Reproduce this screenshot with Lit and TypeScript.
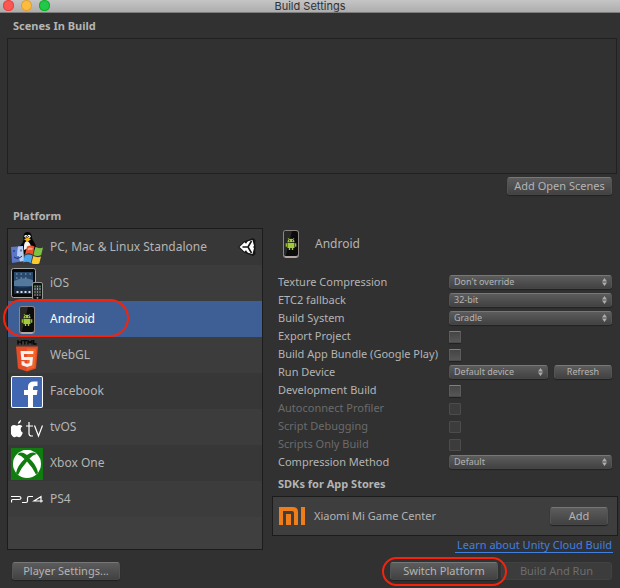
import { LitElement, html, svg, css, nothing, TemplateResult } from "lit";
import { customElement, property, state } from "lit/decorators.js";
import { classMap } from "lit/directives/class-map.js";

const phone = svg`
  <rect x="8" y="2" width="16" height="28" rx="3" fill="#8d8583"/>
  <rect x="9" y="3" width="14" height="25" rx="2" fill="#0b0b0b"/>
  <path d="M9 5q0-2 2-2h6l-6 24h-2z" fill="#292929"/>
  <path d="M10 28h12v1q-1 1-2 1h-8q-2 0-2-1z" fill="#b3a8a4"/>
  <path d="M13 10l1 1.500M19 10l-1 1.500" stroke="#9fc63b" stroke-width=".8"/>
  <path d="M12.500 14.300a3.500 3.500 0 0 1 7 0z" fill="#a4c93c"/>
  <path d="M12.500 15h7v5h-1.300v2h-1.400v-2h-1.600v2h-1.400v-2h-1.300z" fill="#a4c93c"/>
  <path d="M11.300 15.200v3.600M20.700 15.200v3.600" stroke="#a4c93c" stroke-width="1.200"/>
  <path d="M14 12.800h1M17 12.800h1" stroke="#0b0b0b" stroke-width="1"/>`;

const icons: Record<string, TemplateResult> = {
  android: phone,
  desktop: svg`
    <path d="M9 14q3-3 3.500-6C12 3 13 0 16.500 0S21 3 21 6c1 4 4 5 4 10l-6 6h-7z" fill="#050505"/>
    <path d="M13 14q0-4 3-5 3 1 4 6l-7 3z" fill="#f4f4f4"/>
    <circle cx="14.800" cy="4.300" r="1.400" fill="#fff"/><circle cx="18" cy="4.300" r="1.600" fill="#fff"/>
    <circle cx="15.200" cy="4.500" r=".6" fill="#000"/><circle cx="17.700" cy="4.500" r=".6" fill="#000"/>
    <path d="M13 7.200l3.500-1.700 3.500 1.700-3.500 2.500z" fill="#f5b50c"/>
    <path d="M0 15l12-1 1 15-12 2z" fill="#5b78c8"/>
    <path d="M7 14.500l5-.5 1 15-4 .6q-1-3-1-5.600H6q0-5 1-9.500z" fill="#b7cdf2"/>
    <path d="M3 18v2M10 17.500v2M3 25q4 3 8-1" stroke="#1d2c5c" stroke-width="1" fill="none"/>
    <path d="M16 14.500q3.500-2 7.500 0L21.800 22.500q-4-2-7.800 0z" fill="#e8502a"/>
    <path d="M24.300 15q4 2 7.700.5l-1.800 7.500q-4 2-7.700 0z" fill="#7cc142"/>
    <path d="M13.800 23.500q4-2 7.700 0L19.800 31q-4-2-7.800-.5z" fill="#49a6ee"/>
    <path d="M22.300 24q4 2 7.700.5L28.300 31.500q-4 1.500-7.800-.3z" fill="#fbca2f"/>
    <path d="M17 16q2-1 4.800 0l-.6 2q-2-.8-4.700.2z" fill="#f69c7c"/>`,
  ios: svg`
    <rect x=".5" y=".5" width="24" height="29" rx="2" fill="#0a0a0a" stroke="#a6a6a6"/>
    <rect x="3" y="4" width="19" height="22" fill="#28486c"/>
    <path d="M3 13q9-5 19-1v6H3z" fill="#55799c"/><path d="M3 18q8 3 19 0v8H3z" fill="#182b43"/>
    <path d="M5 6h1.500M9.500 6h1.500M14 6h1.500M18.500 6h1.500M5 10h1.500M9.500 10h1.500M14 10h1.500" stroke="#8fa9be" stroke-width="1.200"/>
    <path d="M5.500 24h2M9.500 24h2M13.500 24h2M17.500 24h2" stroke="#d5dde4" stroke-width="2"/>
    <rect x="21.500" y="14.500" width="10" height="17" rx="1.500" fill="#111" stroke="#979797"/>
    <rect x="23" y="17" width="7" height="11" fill="#2c3438"/>
    <path d="M23.500 18.500h1M26 18.500h1M28.500 18.500h1M23.500 24h1M26 24h1M28.500 24h1" stroke="#6fc05a" stroke-width="1.300"/>
    <path d="M23.500 21h1M26 21h1M28.500 21h1" stroke="#c3cdd6" stroke-width="1.300"/>
    <path d="M23.500 27h1M26 27h1M28.500 27h1" stroke="#d9785a" stroke-width="1.300"/>
    <circle cx="26.500" cy="29.800" r=".9" fill="#aaa"/>`,
  webgl: svg`
    <path d="M7 0v4.500M10.500 0v4.500M7 2.200h3.500M11.500.6h4.500M13.800.6v4M17 4.500V.6l2 2.200 2-2.200v3.900M22.700 0v4h3" stroke="#050505" stroke-width="1.300" fill="none"/>
    <path d="M5 6.500h22l-2 22-9 3-9-3z" fill="#e44d26"/>
    <path d="M16 8.500h9.200L23.500 27.500 16 30z" fill="#f16529"/>
    <path d="M9.500 11h13l-.3 3H12.800l.3 3h8.900l-.8 8.300-5.200 1.700-5.300-1.700-.3-4h3l.2 1.800 2.400.7 2.500-.7.2-3.100h-8.300z" fill="#f5f3f1"/>`,
  facebook: svg`
    <rect width="32" height="32" rx="2" fill="#fff"/><rect x="1" y="1" width="30" height="30" rx="1" fill="#4267b2"/>
    <path d="M17 31V19h-4v-5h4v-3q0-5.500 6-5.500h3.500V10H24q-2 0-2 2v2h4.500l-.7 5H22v12z" fill="#fff"/>`,
  tvos: svg`
    <path d="M8.500 9.500q.2-1.400 1-2.200T11.200 6q.1 1.500-.6 2.400-.8 1-2.100 1.100zM6.300 10.700q.9.4 1.300.4.500 0 1.500-.5 2-.5 3.300 1-1.600 1-1.500 2.800.2 2 1.800 2.700-.6 1.900-1.700 3.100-.9 1-2.200.4-1.300-.5-2.400 0-1.300.6-2.200-.4-1.400-1.300-2-3.400-.9-3.200.7-5.100 1.200-1.400 3.400-1z" transform="translate(-3.200 .6) scale(1.180)" fill="#fff"/>
    <path d="M18 10v11.500q0 2.500 2.500 2.500h1.500M15 14h7M23.500 13.500l4 10.500 4-10.500" stroke="#fff" stroke-width="1.200" fill="none"/>`,
  xbox: svg`
    <rect width="32" height="32" fill="#107c10"/><circle cx="16" cy="16" r="14" fill="#fff"/>
    <path d="M8 5q3-1.500 8 2 5-3.500 8-2l1.500 1q-3.500.5-7 4.500 7 6.500 8.500 14l-2 2Q22 20 16 13.500 10 20 7 27l-2-2q1.500-7.500 8.500-14-3.500-4-7-4.500z" fill="#107c10"/>
    <path d="M10 3.300q3 .2 6 2.200 3-2 6-2.200-6-2.800-12 0z" fill="#fff"/>`,
  ps4: svg`
    <path d="M0 12.500h8q2 0 2 1.500t-2 1.500H2q-1.500 0-1.500 1.500v1.500M11 18.500h4q1.500 0 1.500-1.500v-3q0-1.500 1.500-1.500h4M30 18.500v-6l-7 4.500h9" stroke="#fff" stroke-width="1.200" fill="none"/>`,
};

interface Platform { id: string; name: string; current?: boolean; }
interface Setting { id: string; label: string; kind: "select" | "check"; value?: string; action?: string; disabled?: boolean; }

const PLATFORMS: Platform[] = [
  { id: "desktop", name: "PC, Mac & Linux Standalone", current: true },
  { id: "ios", name: "iOS" },
  { id: "android", name: "Android" },
  { id: "webgl", name: "WebGL" },
  { id: "facebook", name: "Facebook" },
  { id: "tvos", name: "tvOS" },
  { id: "xbox", name: "Xbox One" },
  { id: "ps4", name: "PS4" },
];

const SETTINGS: Setting[] = [
  { id: "texture", label: "Texture Compression", kind: "select", value: "Don't override" },
  { id: "etc2", label: "ETC2 fallback", kind: "select", value: "32-bit" },
  { id: "system", label: "Build System", kind: "select", value: "Gradle" },
  { id: "export", label: "Export Project", kind: "check" },
  { id: "bundle", label: "Build App Bundle (Google Play)", kind: "check" },
  { id: "device", label: "Run Device", kind: "select", value: "Default device", action: "Refresh" },
  { id: "dev", label: "Development Build", kind: "check" },
  { id: "profiler", label: "Autoconnect Profiler", kind: "check", disabled: true },
  { id: "debug", label: "Script Debugging", kind: "check", disabled: true },
  { id: "scripts", label: "Scripts Only Build", kind: "check", disabled: true },
  { id: "method", label: "Compression Method", kind: "select", value: "Default" },
];

const controls = css`
  * { box-sizing: border-box; }
  button, select {
    font-family: inherit;
    color: #b4b4b4;
    margin: 0;
    border: 1px solid #545454;
    border-top-color: #777;
    border-bottom-color: #454545;
    border-radius: 3px;
    background: linear-gradient(#5c5c5c, #424242);
    box-shadow: 0 1px 1px #222;
  }
  button {
    height: 18px;
    padding: 0 5px;
    font-size: 11px;
    line-height: 16px;
    white-space: nowrap;
  }
  button:disabled {
    color: #6e6e6e;
    border-color: #414141;
    background: #3c3c3c;
    box-shadow: none;
  }
`;

@customElement("platform-icon")
export class PlatformIcon extends LitElement {
  static styles = css`
    :host { display: block; width: 32px; height: 32px; flex: none; }
    svg { display: block; width: 100%; height: 100%; }
  `;
  @property() name = "android";
  render() {
    return html`<svg viewBox="0 0 32 32" aria-hidden="true">${icons[this.name]}</svg>`;
  }
}

@customElement("setting-row")
export class SettingRow extends LitElement {
  static styles = [controls, css`
    :host { display: grid; grid-template-columns: 171px minmax(0, 1fr); height: 18px; align-items: center; }
    label { line-height: 18px; white-space: nowrap; }
    .off { color: #6b6b6b; }
    .control { display: flex; align-items: center; gap: 6px; }
    .drop { position: relative; flex: 1; min-width: 0; display: flex; }
    select { appearance: none; width: 100%; height: 14px; padding: 0 16px 0 4px; font-size: 9px; line-height: 12px; }
    .arrows { position: absolute; right: 5px; top: 3px; width: 5px; height: 8px; pointer-events: none; }
    button { height: 14px; width: 58px; font-size: 9px; line-height: 12px; }
    input {
      appearance: none; width: 12px; height: 12px; margin: 2px 0 0;
      border: 1px solid #5c5c5c; border-top-color: #808080; border-bottom-color: #4a4a4a; border-radius: 1px;
      background: linear-gradient(#454545, #565656); box-shadow: 0 1px 1px #222;
    }
    input:disabled { border-color: #4c4c4c; background: #3c3c3c; box-shadow: none; }
  `];
  @property({ attribute: false }) setting!: Setting;
  render() {
    const s = this.setting;
    return html`
      <label for=${s.id} class=${classMap({ off: !!s.disabled })}>${s.label}</label>
      <div class="control">
        ${s.kind === "check"
          ? html`<input type="checkbox" id=${s.id} ?disabled=${!!s.disabled}>`
          : html`<span class="drop">
              <select id=${s.id}><option>${s.value}</option></select>
              <svg class="arrows" viewBox="0 0 5 8" aria-hidden="true"><path d="M0 3.500L2.500 0 5 3.500zM0 4.500h5L2.500 8z" fill="#adadad"/></svg>
            </span>`}
        ${s.action ? html`<button type="button">${s.action}</button>` : nothing}
      </div>`;
  }
}

@customElement("app-root")
export class AppRoot extends LitElement {
  static styles = [controls, css`
    :host {
      display: flex; flex-direction: column; min-height: 100vh; box-sizing: border-box;
      background: #313131; color: #b4b4b4;
      font: 11px/18px "Noto Sans", "Open Sans", sans-serif;
    }
    .titlebar {
      display: grid; grid-template-columns: 1fr auto 1fr; align-items: start; flex: none;
      padding: 0 3px;
      background: linear-gradient(#c5c5c5, #adadad); border-bottom: 1px solid #7d7d7d; color: #303030;
    }
    .lights { display: flex; gap: 7px; }
    .light { width: 11px; height: 11px; border-radius: 50%; }
    .close { background: #fc5753; box-shadow: inset 0 0 0 1px #df4744; }
    .min { background: #fdbc40; box-shadow: inset 0 0 0 1px #de9f34; }
    .zoom { background: #21c84a; box-shadow: inset 0 0 0 1px #12ac28; }
    h1 { margin: 0; font: 400 11px/12px Inter, sans-serif; }
    h2 { margin: 0; font-size: 11px; line-height: 18px; font-weight: 700; }
    .scenes { display: flex; flex-direction: column; padding: 4px 3px 0 7px; }
    .scenes h2 { padding-left: 6px; }
    .scene-list { height: 136px; margin-top: 3px; border: 1px solid #202020; }
    .add-open { align-self: flex-end; width: 105px; margin: 3px 5px 0 0; }
    .platform-title { padding: 12px 13px 3px; }
    .body { flex: 1; display: grid; grid-template-columns: minmax(0, 256fr) minmax(0, 346fr); column-gap: 9px; padding: 0 2px 0 7px; }
    .platforms { list-style: none; margin: 0 0 3px; padding: 0; border: 1px solid #1c1c1c; background: #3f3f3f; }
    .platform {
      position: relative; display: flex; align-items: center; gap: 7px; height: 36px; padding: 0 6px 0 3px;
      font-size: 12px; background: #373737; white-space: nowrap;
    }
    .platform platform-icon { margin-top: 2px; }
    .platform:nth-child(even) { background: #3c3c3c; }
    .platform.selected { background: #3e5f96; color: #fff; }
    .pick { height: 36px; flex: 1; padding: 0; border: 0; background: none; box-shadow: none; color: inherit; font-size: 12px; text-align: left; }
    .unity { width: 18px; height: 18px; flex: none; }
    .details { display: flex; flex-direction: column; min-width: 0; }
    .head { display: flex; align-items: center; gap: 8px; height: 32px; padding-left: 3px; font-size: 12px; }
    .settings { padding: 13px 6px 0; }
    .details h2 { padding: 4px 6px 3px; }
    .store { display: flex; align-items: center; height: 40px; padding: 0 9px 0 6px; gap: 9px; border: 1px solid #1c1c1c; background: #3e3e3e; }
    .mi { width: 26px; height: 18px; }
    .store button { width: 58px; margin-left: auto; }
    .cloud { align-self: flex-end; margin: 1px 5px 0; padding: 0 1px 0 2px; line-height: 15px; color: #4280e0; text-decoration: none; border-bottom: 1px solid #4280e0; }
    .footer { display: flex; gap: 3px; flex: none; padding: 9px 8px 8px 12px; }
    .footer button { display: block; width: 108px; }
    .footer .run { width: 111px; }
    .switch { position: relative; margin-left: auto; }
    .ring { position: absolute; border: 2px solid #f5230c; border-radius: 20px; pointer-events: none; z-index: 1; }
    .ring-row { left: -5px; top: -2px; width: 126px; height: 38px; }
    .ring-button { inset: -5px -9px -6px -8px; }
  `];

  @state() private selected = "android";

  render() {
    return html`
      <header class="titlebar">
        <div class="lights"><span class="light close"></span><span class="light min"></span><span class="light zoom"></span></div>
        <h1>Build Settings</h1>
      </header>
      <section class="scenes">
        <h2>Scenes In Build</h2>
        <div class="scene-list"></div>
        <button type="button" class="add-open">Add Open Scenes</button>
      </section>
      <h2 class="platform-title">Platform</h2>
      <main class="body">
        <ul class="platforms">
          ${PLATFORMS.map((p) => html`
            <li class=${classMap({ platform: true, selected: p.id === this.selected })}>
              <platform-icon name=${p.id}></platform-icon>
              <button type="button" class="pick" @click=${() => (this.selected = p.id)}>${p.name}</button>
              ${p.current ? html`<svg class="unity" viewBox="0 0 18 18" aria-hidden="true">
                <path d="M0 9L6 3.500 15 0l2.500 2-.5 7 .5 7-2.500 2-9-3.500z" fill="#151515"/>
                <path d="M1.500 9L6.500 4.300 14.500 2 16.300 9l-1.800 7-8-2.300z" fill="#fff"/>
                <path d="M4.500 9H10M10 9l3.500-6M10 9l3.500 6" stroke="#151515" stroke-width="1.600"/>
                <path d="M10.500 2l-2.500 3.800-1.700-1.700zM10.500 16l-2.500-3.800-1.700 1.700zM17.500 6.500L15 9l2.500 2.500z" fill="#151515"/>
              </svg>` : nothing}
              ${p.id === "android" ? html`<span class="ring ring-row"></span>` : nothing}
            </li>`)}
        </ul>
        <section class="details">
          <div class="head"><platform-icon name="android"></platform-icon><span>Android</span></div>
          <div class="settings">${SETTINGS.map((s) => html`<setting-row .setting=${s}></setting-row>`)}</div>
          <h2>SDKs for App Stores</h2>
          <div class="store">
            <svg class="mi" viewBox="0 0 26 18" aria-hidden="true"><path d="M0 0h14q5 0 5 5v13h-4V6q0-2-2-2H4v14H0zM7 7h5v11H7zM22 0h4v18h-4z" fill="#ef7d1a"/></svg>
            <span>Xiaomi Mi Game Center</span>
            <button type="button">Add</button>
          </div>
          <a class="cloud" href="#cloud-build">Learn about Unity Cloud Build</a>
        </section>
      </main>
      <footer class="footer">
        <button type="button">Player Settings...</button>
        <span class="switch"><button type="button">Switch Platform</button><span class="ring ring-button"></span></span>
        <button type="button" class="run" disabled>Build And Run</button>
      </footer>`;
  }
}
